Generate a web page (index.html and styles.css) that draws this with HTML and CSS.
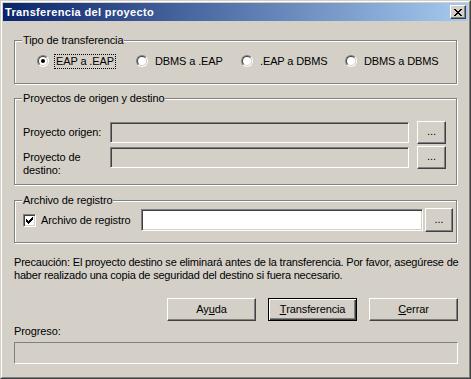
FILE: index.html
```html
<!DOCTYPE html>
<html lang="es">
<head>
<meta charset="utf-8">
<title>Transferencia del proyecto</title>
<link rel="stylesheet" href="styles.css">
</head>
<body>
<div class="window">
  <div class="frame">
    <div class="titlebar">
      <span class="title">Transferencia del proyecto</span>
      <span class="close">
        <svg width="8" height="7" viewBox="0 0 8 7" shape-rendering="crispEdges">
          <rect x="0" y="0" width="2" height="1"/><rect x="6" y="0" width="2" height="1"/>
          <rect x="1" y="1" width="2" height="1"/><rect x="5" y="1" width="2" height="1"/>
          <rect x="2" y="2" width="4" height="1"/>
          <rect x="3" y="3" width="2" height="1"/>
          <rect x="2" y="4" width="4" height="1"/>
          <rect x="1" y="5" width="2" height="1"/><rect x="5" y="5" width="2" height="1"/>
          <rect x="0" y="6" width="2" height="1"/><rect x="6" y="6" width="2" height="1"/>
        </svg>
      </span>
    </div>
    <div class="client">
      <div class="group g1">
        <span class="legend">Tipo de transferencia</span>
        <div class="radios">
          <div class="ritem"><span class="radio"><span class="radio-in"><span class="dot"></span></span></span><span class="rlabel focus">EAP a .EAP</span></div>
          <div class="ritem"><span class="radio"><span class="radio-in"></span></span><span class="rlabel">DBMS a .EAP</span></div>
          <div class="ritem"><span class="radio"><span class="radio-in"></span></span><span class="rlabel">.EAP a DBMS</span></div>
          <div class="ritem"><span class="radio"><span class="radio-in"></span></span><span class="rlabel">DBMS a DBMS</span></div>
        </div>
      </div>

      <div class="group g2">
        <span class="legend">Proyectos de origen y destino</span>
        <div class="pgrid">
          <span class="plabel">Proyecto origen:</span>
          <span class="field disabled"></span>
          <span class="btn small">...</span>
          <span class="plabel two">Proyecto de<br>destino:</span>
          <span class="field disabled"></span>
          <span class="btn small">...</span>
        </div>
      </div>

      <div class="group g3">
        <span class="legend">Archivo de registro</span>
        <div class="logrow">
          <div class="chk-item">
            <span class="checkbox">
              <svg width="7" height="7" viewBox="0 0 7 7" shape-rendering="crispEdges">
                <rect x="0" y="2" width="1" height="3"/>
                <rect x="1" y="3" width="1" height="3"/>
                <rect x="2" y="4" width="1" height="3"/>
                <rect x="3" y="3" width="1" height="3"/>
                <rect x="4" y="2" width="1" height="3"/>
                <rect x="5" y="1" width="1" height="3"/>
                <rect x="6" y="0" width="1" height="3"/>
              </svg>
            </span>
            <span class="clabel">Archivo de registro</span>
          </div>
          <span class="field white logfield"></span>
          <span class="btn logbtn">...</span>
        </div>
      </div>

      <p class="caution">Precaución: El proyecto destino se eliminará antes de la transferencia. Por favor, asegúrese de haber realizado una copia de seguridad del destino si fuera necesario.</p>

      <div class="actions">
        <span class="btn action">Ay<u>u</u>da</span>
        <span class="btn action default"><u>T</u>ransferencia</span>
        <span class="btn action"><u>C</u>errar</span>
      </div>

      <div class="plabel-progress">Progreso:</div>
      <div class="progress"></div>
    </div>
  </div>
</div>
</body>
</html>
```

FILE: styles.css
```css
* { box-sizing: border-box; }

html, body {
  margin: 0;
  padding: 0;
  background: #d4d0c8;
}

body {
  font-family: "Liberation Sans", Arial, sans-serif;
  font-size: 11px;
  letter-spacing: -0.12px;
  color: #000;
  width: 471px;
  height: 379px;
  overflow: hidden;
}

.window {
  width: 471px;
  height: 379px;
  border: 1px solid;
  border-color: #d4d0c8 #404040 #404040 #d4d0c8;
  background: #d4d0c8;
}

.frame {
  width: 100%;
  height: 100%;
  border: 1px solid;
  border-color: #ffffff #808080 #808080 #ffffff;
  padding: 1px;
  display: flex;
  flex-direction: column;
}

.titlebar {
  height: 18px;
  flex: none;
  background: linear-gradient(to right, #0a246a, #a6caf0);
  display: flex;
  align-items: center;
  justify-content: space-between;
  padding: 0 2px 0 2px;
}

.title {
  color: #fff;
  font-weight: bold;
  font-size: 11px;
  letter-spacing: 0.35px;
  line-height: 13px;
}

.close {
  width: 16px;
  height: 14px;
  background: #d4d0c8;
  border: 1px solid;
  border-color: #ffffff #404040 #404040 #ffffff;
  box-shadow: inset -1px -1px 0 #808080;
  display: flex;
  align-items: center;
  justify-content: center;
}

.close svg { display: block; fill: #000; }

.client {
  flex: 1;
  display: flex;
  flex-direction: column;
  padding: 0 10px 0 11px;
}

.group {
  position: relative;
  border: 1px solid #808080;
  box-shadow: inset 1px 1px 0 #fff, 1px 1px 0 #fff;
  width: 443px;
}

.legend {
  position: absolute;
  top: -7px;
  left: 7px;
  padding: 0 1px;
  background: #d4d0c8;
  line-height: 13px;
  white-space: nowrap;
}

.g1 { margin-top: 19px; height: 44px; padding: 14px 0 0 22px; }
.g2 { margin-top: 14px; height: 87px; padding: 22px 0 0 8px; }
.g3 { margin-top: 15px; height: 43px; padding: 7px 0 0 8px; }

.radios {
  display: grid;
  grid-template-columns: 99px 105px 104px auto;
  height: 12px;
}

.ritem {
  display: flex;
  align-items: center;
  height: 12px;
  white-space: nowrap;
}

.radio {
  width: 12px;
  height: 12px;
  flex: none;
  border-radius: 50%;
  border: 1px solid;
  border-color: #808080 #ffffff #ffffff #808080;
}

.radio-in {
  display: flex;
  align-items: center;
  justify-content: center;
  width: 10px;
  height: 10px;
  border-radius: 50%;
  border: 1px solid;
  border-color: #404040 #d4d0c8 #d4d0c8 #404040;
  background: #fff;
}

.dot {
  width: 4px;
  height: 4px;
  border-radius: 50%;
  background: #000;
}

.rlabel {
  margin-left: 5px;
  padding: 0 1px;
  line-height: 13px;
  border: 1px solid transparent;
}

.rlabel.focus {
  border: 1px dotted #000;
}

.pgrid {
  display: grid;
  grid-template-columns: 79px 299px 29px;
  grid-template-rows: 23px 23px;
  column-gap: 8px;
  row-gap: 2px;
  align-items: center;
}

.plabel {
  line-height: 13px;
  white-space: nowrap;
}

.plabel.two {
  align-self: start;
  padding-top: 5px;
}

.field {
  display: block;
  height: 21px;
  border: 1px solid;
  border-color: #808080 #ffffff #ffffff #808080;
  box-shadow: inset 1px 1px 0 #404040, inset -1px -1px 0 #d4d0c8;
}

.field.disabled { background: #d4d0c8; }
.field.white { background: #fff; }

.btn {
  display: flex;
  align-items: center;
  justify-content: center;
  background: #d4d0c8;
  border: 1px solid;
  border-color: #ffffff #404040 #404040 #ffffff;
  box-shadow: inset -1px -1px 0 #808080;
  line-height: 13px;
  white-space: nowrap;
}

.btn.small {
  height: 23px;
  padding-bottom: 2px;
}

.logrow {
  display: flex;
  align-items: center;
  height: 24px;
}

.chk-item {
  width: 118px;
  display: flex;
  align-items: center;
  flex: none;
}

.checkbox {
  width: 13px;
  height: 13px;
  flex: none;
  background: #fff;
  border: 1px solid;
  border-color: #808080 #ffffff #ffffff #808080;
  box-shadow: inset 1px 1px 0 #404040, inset -1px -1px 0 #d4d0c8;
  display: flex;
  align-items: center;
  justify-content: center;
}

.checkbox svg { display: block; fill: #000; }

.clabel {
  margin-left: 5px;
  line-height: 13px;
  white-space: nowrap;
}

.logfield {
  width: 282px;
  height: 22px;
  flex: none;
}

.logbtn {
  width: 28px;
  height: 24px;
  margin-left: 2px;
  flex: none;
  padding-bottom: 2px;
}

.caution {
  margin: 13px 0 0 0;
  line-height: 13px;
  width: 446px;
  letter-spacing: -0.2px;
}

.actions {
  margin-top: 16px;
  display: flex;
  justify-content: flex-end;
  gap: 12px;
  width: 444px;
}

.btn.action {
  width: 89px;
  height: 23px;
}

.btn.default {
  border: 1px solid #000;
  box-shadow: inset 1px 1px 0 #fff, inset -1px -1px 0 #404040, inset -2px -2px 0 #808080;
}

.plabel-progress {
  margin-top: 4px;
  line-height: 13px;
}

.progress {
  margin-top: 4px;
  width: 444px;
  height: 22px;
  border: 1px solid;
  border-color: #808080 #ffffff #ffffff #808080;
}
```
